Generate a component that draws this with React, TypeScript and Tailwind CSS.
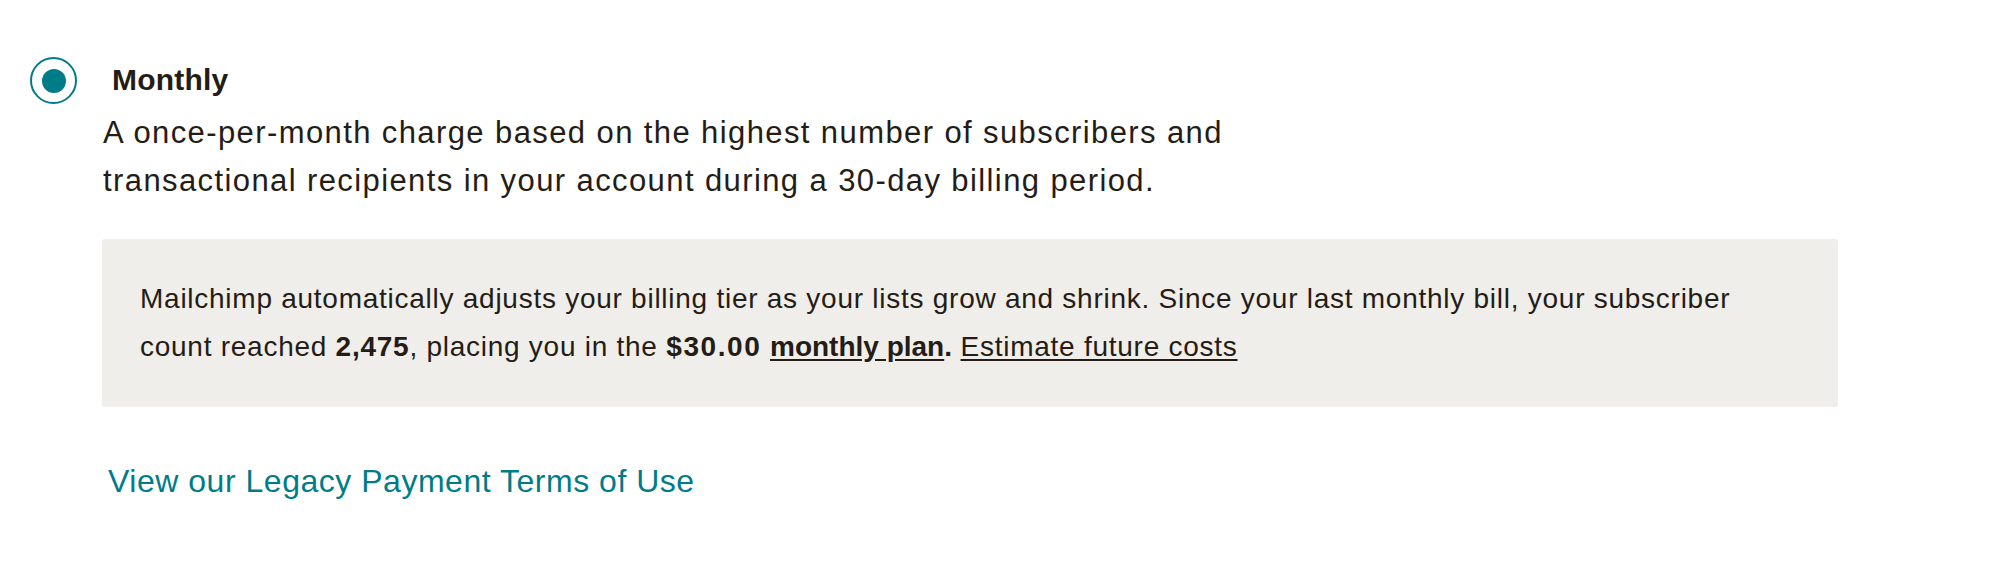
import React from 'react';

// Billing option card: selected "Monthly" plan with tier note and terms link
const RadioDot: React.FC<{ checked?: boolean }> = ({ checked }) => (
  <span className="mt-px flex h-[47px] w-[47px] shrink-0 items-center justify-center rounded-full border-2 border-[#007c89] bg-white">
    {checked && <span className="h-[24px] w-[24px] rounded-full bg-[#007c89]" />}
  </span>
);

const App: React.FC = () => {
  return (
    <div className="min-h-[588px] w-[2000px] bg-white pl-[30px] pt-[56px] font-['Liberation_Sans',Arial,sans-serif] text-[#241c15]">
      {/* Option header */}
      <label className="flex items-start gap-[35px]">
        <RadioDot checked />
        <span className="text-[30px] font-bold leading-[47px] tracking-[0.2px]">Monthly</span>
      </label>

      <div className="ml-[72px]">
        {/* Description */}
        <p className="ml-px mt-[5px] max-w-[1200px] text-[31px] leading-[48px] tracking-[1.4px]">
          A once-per-month charge based on the highest number of subscribers and transactional recipients in your
          account during a 30-day billing period.
        </p>

        {/* Tier note */}
        <div className="mt-[34px] w-[1736px] rounded-[3px] bg-[#efeeea] py-[36px] pl-[38px] pr-[32px] text-[28px] leading-[48px] tracking-[0.74px]">
          Mailchimp automatically adjusts your billing tier as your lists grow and shrink. Since your last monthly bill,
          your subscriber
          <br />
          count reached <strong className="font-bold">2,475</strong>, placing you in the{' '}
          <strong className="font-bold tracking-[1.6px]">$30.00</strong>{' '}
          <strong className="font-bold tracking-[0px]">
            <a href="#" className="underline underline-offset-[3px]">
              monthly plan
            </a>
            .
          </strong>{' '}
          <a href="#" className="underline underline-offset-[3px]">
            Estimate future costs
          </a>
        </div>

        {/* Terms link */}
        <a
          href="#"
          className="ml-[6px] mt-[50px] block w-fit text-[32px] leading-[48px] tracking-[0.52px] text-[#007c89]"
        >
          View our Legacy Payment Terms of Use
        </a>
      </div>
    </div>
  );
};

export default App;
